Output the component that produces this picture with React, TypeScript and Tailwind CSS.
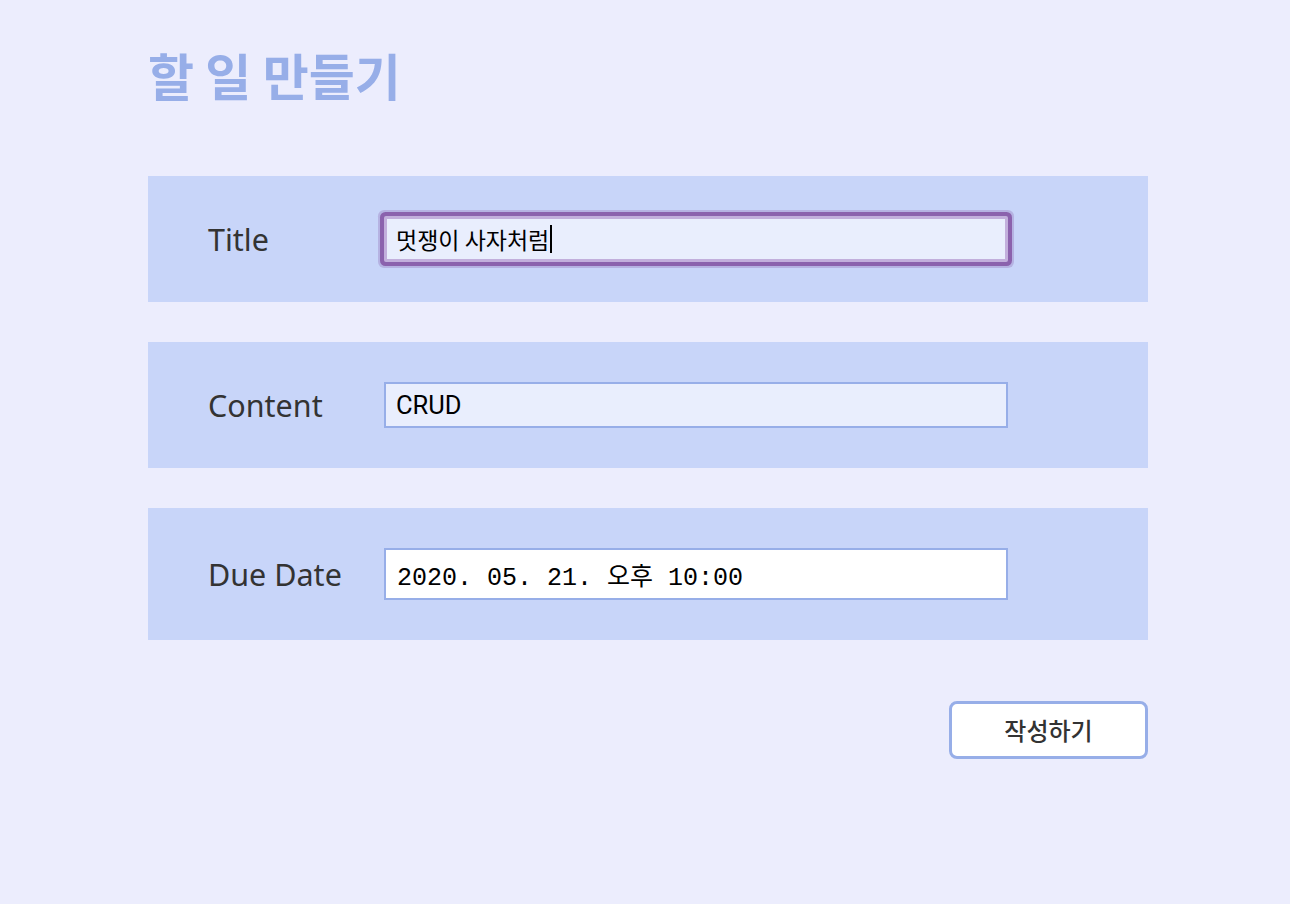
import React from "react";

export default function App() {
  return (
    <div
      className="min-h-[904px] w-full bg-[#ecedfd]"
      style={{ fontFamily: '"Noto Sans", "Noto Sans CJK KR", sans-serif' }}
    >
      <div className="ml-[148px] w-[1000px] pt-[37px]">
        <h1
          className="text-[50px] font-bold leading-[74px] text-[#97aee8]"
          style={{ fontFamily: '"Noto Sans CJK KR", sans-serif' }}
        >
          할 일 만들기
        </h1>
        <div className="mt-[65px] flex flex-col gap-10">
          <div className="flex items-center bg-[#c8d5f9] py-10 pl-[60px]">
            <label className="w-[176px] text-[30.5px] leading-[40px] text-[#333333]">Title</label>
            <div
              className="flex h-[46px] w-[624px] items-center rounded-[2px] border-[3px] border-[#c2afdc] bg-[#e9eefd] px-[9px] text-[23px] leading-[30px] text-black shadow-[0_0_0_4px_#8b62ad,0_0_0_6px_rgba(139,98,173,0.3)]"
              style={{ fontFamily: '"Noto Sans CJK KR", sans-serif' }}
            >
              <span>멋쟁이 사자처럼</span>
              <span className="ml-[1px] inline-block h-[28px] w-[2px] bg-black" />
            </div>
          </div>
          <div className="flex items-center bg-[#c8d5f9] py-10 pl-[60px]">
            <label className="w-[176px] text-[30.5px] leading-[40px] text-[#333333]">Content</label>
            <input
              type="text"
              defaultValue="CRUD"
              className="h-[46px] w-[624px] border-2 border-[#97aee8] bg-[#e9eefd] px-[10px] text-[25.5px] leading-[30px] text-black outline-none"
              style={{ fontFamily: 'Roboto, "Noto Sans CJK KR", sans-serif' }}
            />
          </div>
          <div className="flex items-center bg-[#c8d5f9] py-10 pl-[60px]">
            <label className="w-[176px] text-[30.5px] leading-[40px] text-[#333333]">Due Date</label>
            <input
              type="text"
              defaultValue="2020. 05. 21. 오후 10:00"
              className="h-[52px] w-[624px] border-2 border-[#97aee8] bg-white px-[11px] text-[25px] leading-[30px] text-black outline-none"
              style={{ fontFamily: '"Liberation Mono", "Noto Sans CJK KR", monospace' }}
            />
          </div>
        </div>
        <div className="mt-[61px] flex justify-end">
          <button
            className="h-[58px] w-[199px] rounded-[8px] border-[3px] border-[#97aee8] bg-white text-[24px] font-medium text-[#333333]"
            style={{ fontFamily: '"Noto Sans CJK KR", sans-serif' }}
          >
            작성하기
          </button>
        </div>
      </div>
    </div>
  );
}
